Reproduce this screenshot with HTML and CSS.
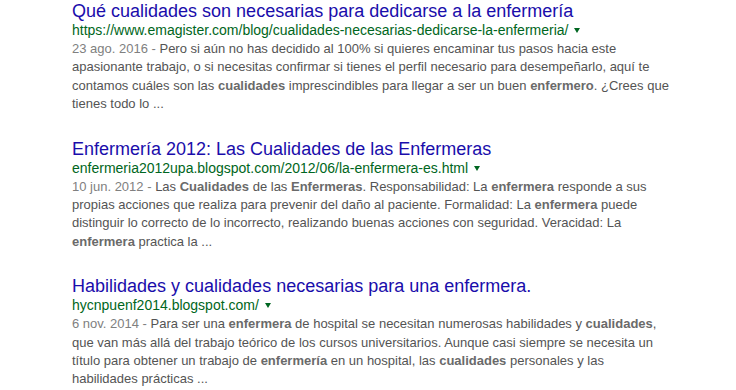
FILE: index.html
```html
<!DOCTYPE html>
<html lang="es">
<head>
<meta charset="utf-8">
<link rel="stylesheet" href="styles.css">
</head>
<body>
<div class="results">
  <div class="g">
    <h3 class="r"><a href="#">Qué cualidades son necesarias para dedicarse a la enfermería</a></h3>
    <div class="url"><cite>https://www.emagister.com/blog/cualidades-necesarias-dedicarse-la-enfermeria/</cite><span class="arrow"></span></div>
    <div class="st"><span class="date">23 ago. 2016 - </span>Pero si aún no has decidido al 100% si quieres encaminar tus pasos hacia este<br>apasionante trabajo, o si necesitas confirmar si tienes el perfil necesario para desempeñarlo, aquí te<br>contamos cuáles son las <em>cualidades</em> imprescindibles para llegar a ser un buen <em>enfermero</em>. ¿Crees que<br>tienes todo lo ...</div>
  </div>
  <div class="g">
    <h3 class="r"><a href="#">Enfermería 2012: Las Cualidades de las Enfermeras</a></h3>
    <div class="url"><cite>enfermeria2012upa.blogspot.com/2012/06/la-enfermera-es.html</cite><span class="arrow"></span></div>
    <div class="st"><span class="date">10 jun. 2012 - </span>Las <em>Cualidades</em> de las <em>Enfermeras</em>. Responsabilidad: La <em>enfermera</em> responde a sus<br>propias acciones que realiza para prevenir del daño al paciente. Formalidad: La <em>enfermera</em> puede<br>distinguir lo correcto de lo incorrecto, realizando buenas acciones con seguridad. Veracidad: La<br><em>enfermera</em> practica la ...</div>
  </div>
  <div class="g">
    <h3 class="r"><a href="#">Habilidades y cualidades necesarias para una enfermera.</a></h3>
    <div class="url"><cite>hycnpuenf2014.blogspot.com/</cite><span class="arrow"></span></div>
    <div class="st"><span class="date">6 nov. 2014 - </span>Para ser una <em>enfermera</em> de hospital se necesitan numerosas habilidades y <em>cualidades</em>,<br>que van más allá del trabajo teórico de los cursos universitarios. Aunque casi siempre se necesita un<br>título para obtener un trabajo de <em>enfermería</em> en un hospital, las <em>cualidades</em> personales y las<br>habilidades prácticas ...</div>
  </div>
</div>
</body>
</html>
```
FILE: styles.css
```css
html, body {
  margin: 0;
  padding: 0;
  background: #fff;
}
body {
  font-family: Arial, "Liberation Sans", sans-serif;
  width: 736px;
  height: 390px;
  overflow: hidden;
}
.results {
  display: flex;
  flex-direction: column;
  gap: 24px;
  padding-left: 72px;
  padding-top: 0;
}
.g {
  width: 640px;
}
.r {
  margin: 0;
  font-size: 18px;
  font-weight: normal;
  line-height: 22px;
  white-space: nowrap;
}
.r a {
  color: #1a0dab;
  text-decoration: none;
}
.url {
  display: flex;
  align-items: center;
  height: 16px;
  line-height: 16px;
  white-space: nowrap;
}
cite {
  font-style: normal;
  font-size: 14px;
  color: #006621;
}
.arrow {
  display: inline-block;
  margin-left: 6px;
  margin-top: 1px;
  width: 0;
  height: 0;
  border-left: 3.5px solid transparent;
  border-right: 3.5px solid transparent;
  border-top: 5px solid #006621;
}
.st {
  margin-top: 2px;
  font-size: 13px;
  line-height: 18.4px;
  color: #545454;
  white-space: nowrap;
}
.st em {
  font-style: normal;
  font-weight: bold;
  color: #6a6a6a;
}
.date {
  color: #808080;
}
```
